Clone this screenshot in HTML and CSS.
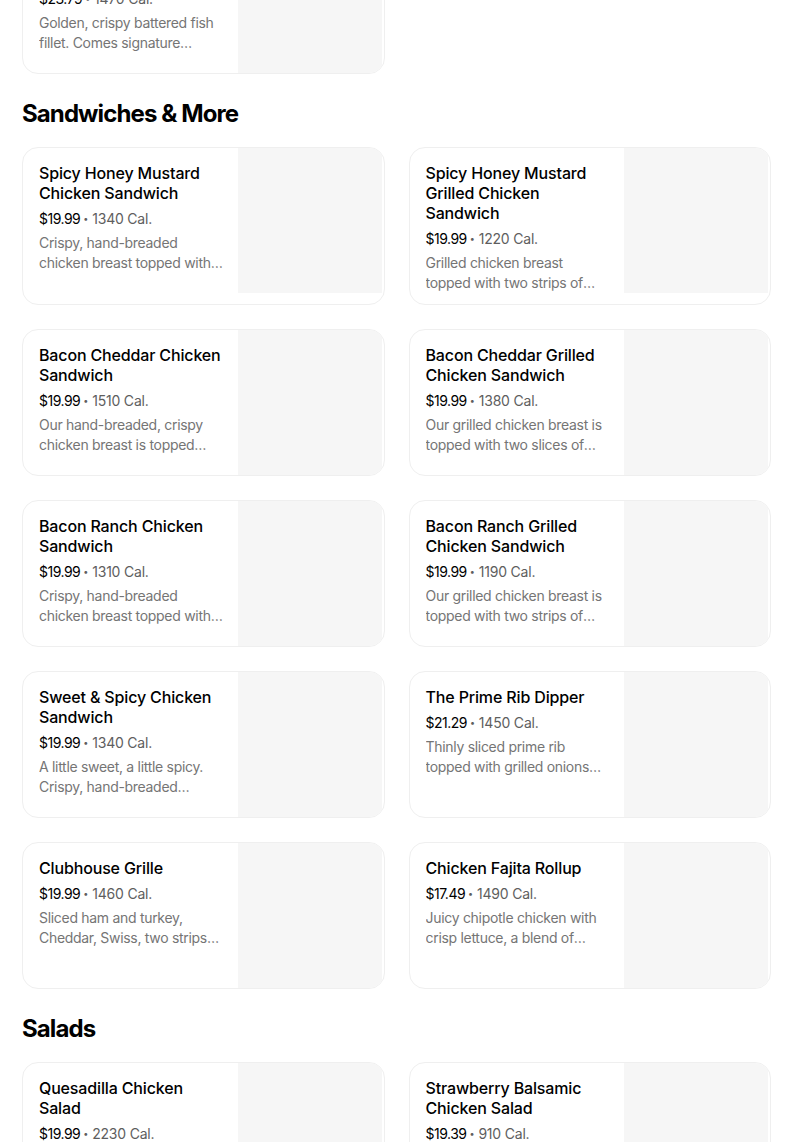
FILE: index.html
```html
<!DOCTYPE html>
<html lang="en">
<head>
<meta charset="utf-8">
<title>Menu</title>
<link rel="stylesheet" href="styles.css">
</head>
<body>
<main class="page">
  <section class="section first">
    <div class="grid">
      <article class="card">
        <div class="info">
          <h3 class="title">Hand-Battered Fish &amp; Chips</h3>
          <p class="meta"><span class="price">$23.79</span><span class="dot">•</span>1470 Cal.</p>
          <p class="desc">Golden, crispy battered fish fillet. Comes signature coleslaw and classic fries.</p>
        </div>
        <div class="thumb"></div>
      </article>
    </div>
  </section>

  <section class="section">
    <h2 class="heading">Sandwiches &amp; More</h2>
    <div class="grid">
      <article class="card">
        <div class="info">
          <h3 class="title">Spicy Honey Mustard Chicken Sandwich</h3>
          <p class="meta"><span class="price">$19.99</span><span class="dot">•</span>1340 Cal.</p>
          <p class="desc">Crispy, hand-breaded chicken breast topped with spicy honey mustard, pickles and lettuce.</p>
        </div>
        <div class="thumb"></div>
      </article>
      <article class="card">
        <div class="info">
          <h3 class="title">Spicy Honey Mustard Grilled Chicken Sandwich</h3>
          <p class="meta"><span class="price">$19.99</span><span class="dot">•</span>1220 Cal.</p>
          <p class="desc">Grilled chicken breast topped with two strips of bacon and spicy honey mustard.</p>
        </div>
        <div class="thumb"></div>
      </article>
      <article class="card">
        <div class="info">
          <h3 class="title">Bacon Cheddar Chicken Sandwich</h3>
          <p class="meta"><span class="price">$19.99</span><span class="dot">•</span>1510 Cal.</p>
          <p class="desc">Our hand-breaded, crispy chicken breast is topped with two slices of cheddar and bacon.</p>
        </div>
        <div class="thumb"></div>
      </article>
      <article class="card">
        <div class="info">
          <h3 class="title">Bacon Cheddar Grilled Chicken Sandwich</h3>
          <p class="meta"><span class="price">$19.99</span><span class="dot">•</span>1380 Cal.</p>
          <p class="desc">Our grilled chicken breast is topped with two slices of cheddar and bacon.</p>
        </div>
        <div class="thumb"></div>
      </article>
      <article class="card">
        <div class="info">
          <h3 class="title">Bacon Ranch Chicken Sandwich</h3>
          <p class="meta"><span class="price">$19.99</span><span class="dot">•</span>1310 Cal.</p>
          <p class="desc">Crispy, hand-breaded chicken breast topped with bacon, ranch and cheddar.</p>
        </div>
        <div class="thumb"></div>
      </article>
      <article class="card">
        <div class="info">
          <h3 class="title">Bacon Ranch Grilled Chicken Sandwich</h3>
          <p class="meta"><span class="price">$19.99</span><span class="dot">•</span>1190 Cal.</p>
          <p class="desc">Our grilled chicken breast is topped with two strips of bacon and ranch.</p>
        </div>
        <div class="thumb"></div>
      </article>
      <article class="card">
        <div class="info">
          <h3 class="title">Sweet &amp; Spicy Chicken Sandwich</h3>
          <p class="meta"><span class="price">$19.99</span><span class="dot">•</span>1340 Cal.</p>
          <p class="desc">A little sweet, a little spicy. Crispy, hand-breaded chicken breast tossed in sauce.</p>
        </div>
        <div class="thumb"></div>
      </article>
      <article class="card">
        <div class="info">
          <h3 class="title">The Prime Rib Dipper</h3>
          <p class="meta"><span class="price">$21.29</span><span class="dot">•</span>1450 Cal.</p>
          <p class="desc">Thinly sliced prime rib topped with grilled onions and melted cheese.</p>
        </div>
        <div class="thumb"></div>
      </article>
      <article class="card">
        <div class="info">
          <h3 class="title">Clubhouse Grille</h3>
          <p class="meta"><span class="price">$19.99</span><span class="dot">•</span>1460 Cal.</p>
          <p class="desc">Sliced ham and turkey, Cheddar, Swiss, two strips of bacon, lettuce and tomato.</p>
        </div>
        <div class="thumb"></div>
      </article>
      <article class="card">
        <div class="info">
          <h3 class="title">Chicken Fajita Rollup</h3>
          <p class="meta"><span class="price">$17.49</span><span class="dot">•</span>1490 Cal.</p>
          <p class="desc">Juicy chipotle chicken with crisp lettuce, a blend of cheeses and pico de gallo.</p>
        </div>
        <div class="thumb"></div>
      </article>
    </div>
  </section>

  <section class="section">
    <h2 class="heading">Salads</h2>
    <div class="grid">
      <article class="card">
        <div class="info">
          <h3 class="title">Quesadilla Chicken Salad</h3>
          <p class="meta"><span class="price">$19.99</span><span class="dot">•</span>2230 Cal.</p>
          <p class="desc">Crispy chicken, pico de gallo and cheese on fresh greens with tortilla strips.</p>
        </div>
        <div class="thumb"></div>
      </article>
      <article class="card">
        <div class="info">
          <h3 class="title">Strawberry Balsamic Chicken Salad</h3>
          <p class="meta"><span class="price">$19.39</span><span class="dot">•</span>910 Cal.</p>
          <p class="desc">Grilled chicken, strawberries and feta on mixed greens with balsamic.</p>
        </div>
        <div class="thumb"></div>
      </article>
    </div>
  </section>
</main>
</body>
</html>
```

FILE: styles.css
```css
* {
  box-sizing: border-box;
}

html, body {
  margin: 0;
  padding: 0;
  background: #ffffff;
}

body {
  font-family: "Inter", "Liberation Sans", sans-serif;
  color: #000000;
  overflow: hidden;
}

.page {
  padding: 0 33px 0 22px;
  margin-top: -73px;
}

.heading {
  margin: 24px 0 17px;
  font-size: 24px;
  line-height: 32px;
  font-weight: 700;
  letter-spacing: -0.9px;
  color: #000000;
}

.grid {
  display: grid;
  grid-template-columns: 1fr 1fr;
  gap: 24px;
}

.card {
  display: flex;
  border: 1px solid #efefef;
  border-radius: 16px;
  overflow: hidden;
  background: #ffffff;
}

.info {
  flex: 1;
  min-width: 0;
  padding: 15px 14px 11px 16px;
}

.thumb {
  flex: none;
  width: 144px;
  height: 145px;
  margin-right: 2px;
  background: #f6f6f6;
}

.title {
  margin: 0;
  font-size: 16px;
  line-height: 20px;
  font-weight: 500;
  letter-spacing: -0.15px;
  color: #000000;
}

.meta {
  margin: 6px 0 0;
  font-size: 14px;
  line-height: 20px;
  letter-spacing: -0.2px;
  color: #5e5e5e;
}

.price {
  color: #000000;
  letter-spacing: -0.5px;
}

.dot {
  display: inline-block;
  margin: 0 4px 0 3px;
  font-size: 9px;
  vertical-align: 2px;
  color: #5e5e5e;
}

.desc {
  margin: 4px 0 0;
  font-size: 14px;
  line-height: 20px;
  letter-spacing: -0.3px;
  color: #757575;
  display: -webkit-box;
  -webkit-line-clamp: 2;
  -webkit-box-orient: vertical;
  overflow: hidden;
}
```
